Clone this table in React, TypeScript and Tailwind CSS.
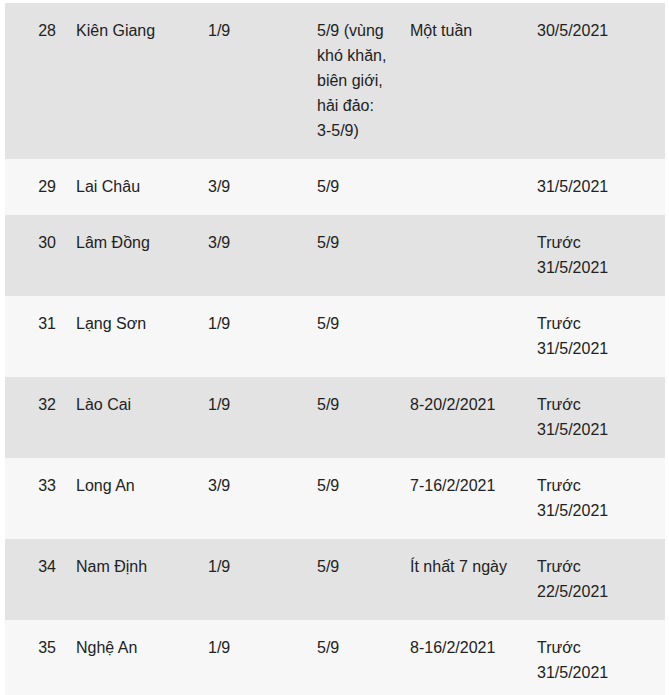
type Row = {
  no: number;
  name: string;
  back: string;
  start: string;
  off: string;
  end: string[];
};

const rows: Row[] = [
  { no: 28, name: "Kiên Giang", back: "1/9", start: "5/9 (vùng khó khăn, biên giới, hải đảo: 3-5/9)", off: "Một tuần", end: ["30/5/2021"] },
  { no: 29, name: "Lai Châu", back: "3/9", start: "5/9", off: "", end: ["31/5/2021"] },
  { no: 30, name: "Lâm Đồng", back: "3/9", start: "5/9", off: "", end: ["Trước", "31/5/2021"] },
  { no: 31, name: "Lạng Sơn", back: "1/9", start: "5/9", off: "", end: ["Trước", "31/5/2021"] },
  { no: 32, name: "Lào Cai", back: "1/9", start: "5/9", off: "8-20/2/2021", end: ["Trước", "31/5/2021"] },
  { no: 33, name: "Long An", back: "3/9", start: "5/9", off: "7-16/2/2021", end: ["Trước", "31/5/2021"] },
  { no: 34, name: "Nam Định", back: "1/9", start: "5/9", off: "Ít nhất 7 ngày", end: ["Trước", "22/5/2021"] },
  { no: 35, name: "Nghệ An", back: "1/9", start: "5/9", off: "8-16/2/2021", end: ["Trước", "31/5/2021"] },
];

export default function App() {
  return (
    <div className="min-h-screen bg-white pt-[3px] pl-[5px] font-['Liberation_Sans',Arial,sans-serif] text-[16px] leading-[25px] text-[#222]">
      <table className="w-[660px] table-fixed border-collapse">
        <colgroup>
          <col className="w-[61px]" />
          <col className="w-[132px]" />
          <col className="w-[109px]" />
          <col className="w-[93px]" />
          <col className="w-[127px]" />
          <col className="w-[138px]" />
        </colgroup>
        <tbody>
          {rows.map((r, i) => (
            <tr key={r.no} className={i % 2 === 0 ? "bg-[#e3e3e3]" : "bg-[#f7f7f7]"}>
              <td className="pt-[15px] pb-[16px] pr-[10px] text-right align-top">{r.no}</td>
              <td className="pt-[15px] pb-[16px] px-[10px] align-top">{r.name}</td>
              <td className="pt-[15px] pb-[16px] px-[10px] align-top">{r.back}</td>
              <td className="pt-[15px] pb-[16px] pl-[10px] pr-[8px] align-top">{r.start}</td>
              <td className="pt-[15px] pb-[16px] px-[10px] align-top">{r.off}</td>
              <td className="pt-[15px] pb-[16px] pl-[10px] pr-[28px] align-top">
                {r.end.map((t) => (
                  <div key={t}>{t}</div>
                ))}
              </td>
            </tr>
          ))}
        </tbody>
      </table>
    </div>
  );
}
